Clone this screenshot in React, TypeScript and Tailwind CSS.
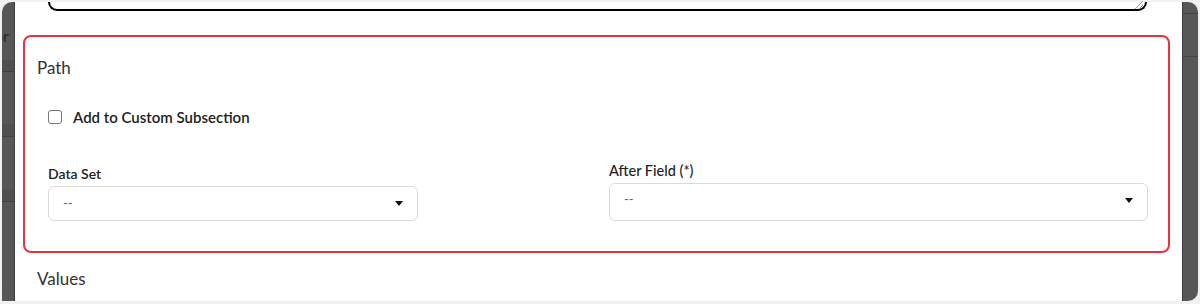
import React from "react";

const font = { fontFamily: "Lato, 'Noto Sans', sans-serif" };

function Caret() {
  return (
    <svg width="8" height="5" viewBox="0 0 8 5" className="shrink-0">
      <path d="M0 0h8L4 5z" fill="#111" />
    </svg>
  );
}

function SelectBox({ tall }: { tall?: boolean }) {
  return (
    <div
      className={`flex items-center justify-between rounded-[6px] border border-[#dcdcdc] bg-white pl-[14px] pr-[14px] ${
        tall ? "h-[38px] pb-[4px]" : "h-[35px]"
      }`}
    >
      <span className="text-[13px] text-[#666]">--</span>
      <Caret />
    </div>
  );
}

export default function App() {
  return (
    <div
      className="flex h-[304px] w-[1200px] overflow-hidden bg-[#f1f1f5] pb-[3px] pl-[2px] pr-[2px] pt-[2px]"
      style={font}
    >
      {/* page behind the overlay, left */}
      <div className="relative flex w-[13px] flex-col overflow-hidden rounded-tl-[10px] border-r border-[#3f3f3f] bg-[#575757]">
        <span className="absolute left-[-8px] top-[22px] text-[16px] text-[#262626]">or</span>
        <div className="mt-[58px] h-[12px] border-b border-[#404040] bg-[#505050]" />
        <div className="mt-[52px] h-[13px] border-b border-[#404040] bg-[#505050]" />
        <div className="mt-[52px] h-[13px] border-b border-[#404040] bg-[#505050]" />
        <span className="absolute left-[-6px] top-[268px] text-[16px] text-[#262626]">s A</span>
      </div>

      {/* modal */}
      <div className="flex w-[1167px] flex-col bg-white">
        <div className="relative ml-[33px] h-[9px] w-[1099px] rounded-b-[10px] border-x-2 border-b-2 border-black">
          <svg width="10" height="8" viewBox="0 0 10 8" className="absolute bottom-[0px] right-[1px]">
            <path d="M9 0L1 8M9 4L5 8" stroke="#999" strokeWidth="1" />
          </svg>
        </div>

        <div className="ml-[8px] mr-[12px] mt-[24px] flex flex-col rounded-[8px] border-2 border-[#f0303d] pb-[30px] pl-[12px] pr-[20px] pt-[19px]">
          <div className="text-[17px] leading-6 text-[#333]">Path</div>

          <label className="ml-[11px] mt-[27px] flex h-[20px] items-center gap-[11px]">
            <span className="h-[14px] w-[14px] rounded-[3px] border border-[#767676] bg-white" />
            <span className="text-[15px] font-semibold text-[#222]">Add to Custom Subsection</span>
          </label>

          <div className="ml-[11px] mt-[34px] flex items-end">
            <div className="flex w-[370px] flex-col gap-[2px]">
              <span className="text-[14px] font-semibold leading-5 text-[#222]">Data Set</span>
              <SelectBox />
            </div>
            <div className="ml-[191px] flex flex-1 flex-col gap-[2px]">
              <span className="text-[14.5px] font-medium leading-5 text-[#222]">After Field (*)</span>
              <SelectBox tall />
            </div>
          </div>
        </div>

        <div className="ml-[22px] mt-[14px] text-[17px] leading-6 text-[#333]">Values</div>
      </div>

      {/* page behind the overlay, right */}
      <div className="flex flex-1 flex-col rounded-tr-[10px] rounded-br-[10px] border-l border-[#3f3f3f] bg-[#575757]">
        <div className="h-[12px] border-b border-[#444]" />
        <div className="h-[43px] border-b border-[#444]" />
      </div>
    </div>
  );
}
